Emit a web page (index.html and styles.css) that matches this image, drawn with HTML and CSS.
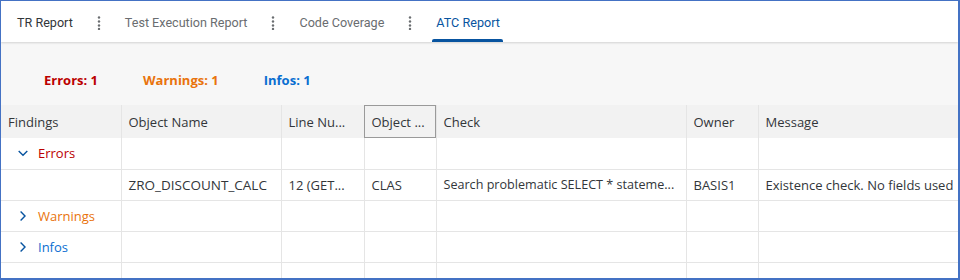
FILE: index.html
```html
<!doctype html>
<html lang="en">

<head>
  <meta charset="UTF-8">
  <title>ATC Report</title>
  <link rel="stylesheet" href="styles.css">
</head>

<body>
  <div class="frame">
    <nav class="tabs">
      <span class="tabs__item tabs__item--main">TR Report</span>
      <svg class="tabs__more" width="4" height="14" viewBox="0 0 4 14">
        <circle cx="2" cy="1.5" r="1.2" fill="#6a6d70" />
        <circle cx="2" cy="5.5" r="1.2" fill="#6a6d70" />
        <circle cx="2" cy="9.5" r="1.2" fill="#6a6d70" />
        <circle cx="2" cy="13" r="1.2" fill="#6a6d70" />
      </svg>
      <span class="tabs__item">Test Execution Report</span>
      <svg class="tabs__more" width="4" height="14" viewBox="0 0 4 14">
        <circle cx="2" cy="1.5" r="1.2" fill="#6a6d70" />
        <circle cx="2" cy="5.5" r="1.2" fill="#6a6d70" />
        <circle cx="2" cy="9.5" r="1.2" fill="#6a6d70" />
        <circle cx="2" cy="13" r="1.2" fill="#6a6d70" />
      </svg>
      <span class="tabs__item">Code Coverage</span>
      <svg class="tabs__more" width="4" height="14" viewBox="0 0 4 14">
        <circle cx="2" cy="1.5" r="1.2" fill="#6a6d70" />
        <circle cx="2" cy="5.5" r="1.2" fill="#6a6d70" />
        <circle cx="2" cy="9.5" r="1.2" fill="#6a6d70" />
        <circle cx="2" cy="13" r="1.2" fill="#6a6d70" />
      </svg>
      <span class="tabs__item tabs__item--active">ATC Report</span>
    </nav>

    <div class="summary">
      <span class="summary__count summary__count--error">Errors: 1</span>
      <span class="summary__count summary__count--warning">Warnings: 1</span>
      <span class="summary__count summary__count--info">Infos: 1</span>
    </div>

    <table class="grid">
      <colgroup>
        <col style="width: 120px">
        <col style="width: 160px">
        <col style="width: 83px">
        <col style="width: 72px">
        <col style="width: 250px">
        <col style="width: 72px">
        <col>
      </colgroup>
      <thead>
        <tr>
          <th>Findings</th>
          <th>Object Name</th>
          <th>Line Nu...</th>
          <th class="grid__focus">Object ...</th>
          <th>Check</th>
          <th>Owner</th>
          <th>Message</th>
        </tr>
      </thead>
      <tbody>
        <tr>
          <td>
            <span class="group group--error">
              <svg class="group__toggle" width="10" height="10" viewBox="0 0 10 10">
                <path d="M0.7 3L5 7.3L9.3 3" fill="none" stroke="#0854a0" stroke-width="1.4" />
              </svg>
              Errors
            </span>
          </td>
          <td></td><td></td><td></td><td></td><td></td><td></td>
        </tr>
        <tr>
          <td></td>
          <td class="grid__name">ZRO_DISCOUNT_CALC</td>
          <td>12 (GET...</td>
          <td>CLAS</td>
          <td class="grid__check">Search problematic SELECT * stateme...</td>
          <td>BASIS1</td>
          <td>Existence check. No fields used</td>
        </tr>
        <tr>
          <td>
            <span class="group group--warning">
              <svg class="group__toggle" width="10" height="10" viewBox="0 0 10 10">
                <path d="M2.6 0.6L7 5L2.6 9.4" fill="none" stroke="#0854a0" stroke-width="1.4" />
              </svg>
              Warnings
            </span>
          </td>
          <td></td><td></td><td></td><td></td><td></td><td></td>
        </tr>
        <tr>
          <td>
            <span class="group group--info">
              <svg class="group__toggle" width="10" height="10" viewBox="0 0 10 10">
                <path d="M2.6 0.6L7 5L2.6 9.4" fill="none" stroke="#0854a0" stroke-width="1.4" />
              </svg>
              Infos
            </span>
          </td>
          <td></td><td></td><td></td><td></td><td></td><td></td>
        </tr>
        <tr>
          <td></td><td></td><td></td><td></td><td></td><td></td><td></td>
        </tr>
      </tbody>
    </table>
  </div>
</body>

</html>
```

FILE: styles.css
```css
:root {
  --font-stack: 'Open Sans', 'Liberation Sans', sans-serif;
  --text-color: #32363a;
  --muted-color: #6a6d70;
  --accent-color: #0854a0;
  --line-color: #e5e5e5;
}

*,
*::before,
*::after {
  box-sizing: border-box;
}

body {
  margin: 0;
  font-family: var(--font-stack);
  color: var(--text-color);
  background-color: #fff;
}

.frame {
  height: 280px;
  overflow: hidden;
  border: 1px solid #4472c4;
  border-right-width: 2px;
  border-bottom-width: 2px;
  background-color: #f7f7f7;
}

/* tab bar */
.tabs {
  display: flex;
  align-items: center;
  height: 41px;
  padding-left: 16px;
  background-color: #fff;
  box-shadow: 0 1px 2px rgba(0, 0, 0, 0.15);
  position: relative;
}

.tabs__item {
  position: relative;
  display: flex;
  align-items: center;
  height: 100%;
  padding-top: 2px;
  font-family: Roboto, var(--font-stack);
  font-size: 12.6px;
  color: var(--muted-color);
  white-space: nowrap;
}

.tabs__item--main {
  color: var(--text-color);
}

.tabs__item--active {
  color: var(--accent-color);
}

.tabs__item--active::after {
  content: "";
  position: absolute;
  left: -4px;
  right: -3px;
  bottom: 0;
  height: 3px;
  border-radius: 2px 2px 0 0;
  background-color: var(--accent-color);
}

.tabs__more {
  margin: 2px 24px 0;
}

/* counters */
.summary {
  display: flex;
  gap: 45px;
  padding: 29px 0 16px 43px;
  height: 63px;
}

.summary__count {
  font-size: 13px;
  font-weight: 700;
}

.summary__count--error {
  color: #bb0000;
}

.summary__count--warning {
  color: #e9730c;
}

.summary__count--info {
  color: #0a6ed1;
}

/* table */
.grid {
  width: 100%;
  table-layout: fixed;
  border-collapse: collapse;
  background-color: #fff;
  font-size: 13px;
}

.grid th {
  height: 33px;
  padding: 0 7px;
  text-align: left;
  font-weight: 400;
  color: var(--text-color);
  background-color: #f2f2f2;
  border-right: 1px solid var(--line-color);
  white-space: nowrap;
  overflow: hidden;
}

.grid th.grid__focus {
  outline: 1px solid #9a9a9a;
  outline-offset: -1px;
}

.grid td {
  height: 31px;
  padding: 0 7px;
  border-right: 1px solid var(--line-color);
  border-bottom: 1px solid var(--line-color);
  white-space: nowrap;
  overflow: hidden;
}

.grid td.grid__name {
  font-size: 13.5px;
}

.grid td.grid__check {
  font-size: 12.6px;
}

.grid th:last-child,
.grid td:last-child {
  border-right: none;
}

.group {
  display: flex;
  align-items: center;
  gap: 10px;
  padding-left: 10px;
}

.group--error {
  color: #bb0000;
}

.group--warning {
  color: #e9730c;
}

.group--info {
  color: #0a6ed1;
}
```
